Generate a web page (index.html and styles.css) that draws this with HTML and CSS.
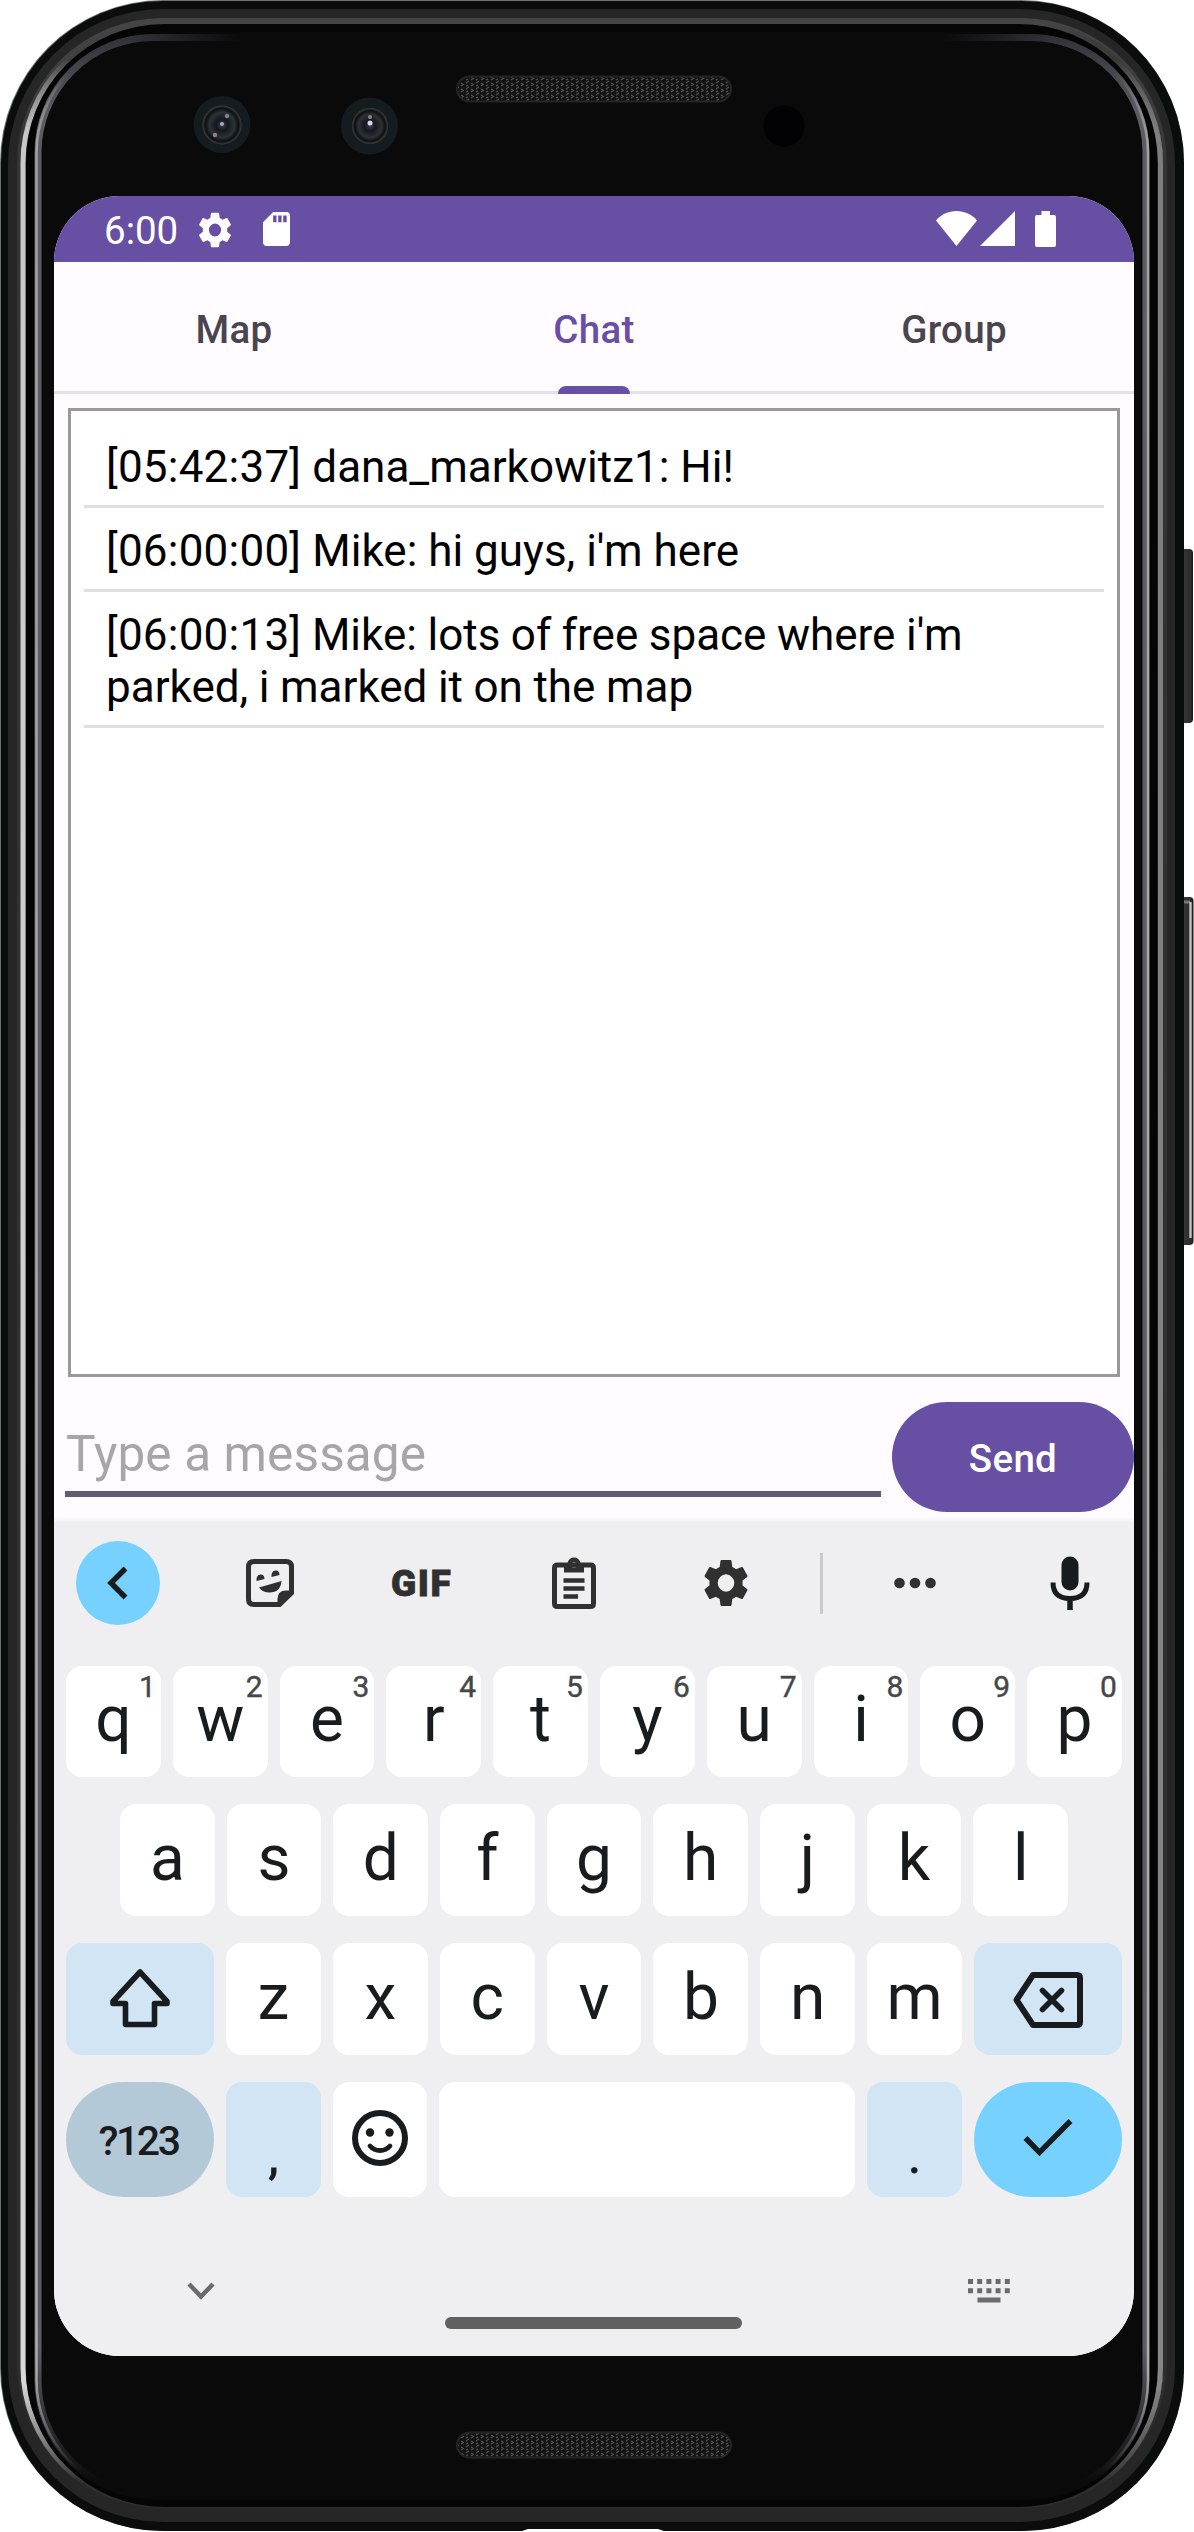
FILE: index.html
```html
<!DOCTYPE html>
<html lang="en">
<head>
<meta charset="utf-8">
<title>Chat</title>
<link rel="stylesheet" href="styles.css">
</head>
<body>
<div class="phone">
  <svg class="shell" width="1194" height="2532" viewBox="0 0 1194 2532" aria-hidden="true">
    <defs>
      <linearGradient id="bright" x1="0" y1="0" x2="0" y2="1">
        <stop offset="0.015" stop-color="#fff" stop-opacity="0"/>
        <stop offset="0.045" stop-color="#c8c8c8"/>
        <stop offset="0.95" stop-color="#d8d8d8"/>
        <stop offset="0.99" stop-color="#fff" stop-opacity="0"/>
      </linearGradient>
      <linearGradient id="inner" x1="0" y1="0" x2="0" y2="1">
        <stop offset="0" stop-color="#32323a"/>
        <stop offset="0.03" stop-color="#5c5c63"/>
        <stop offset="0.94" stop-color="#5c5c63"/>
        <stop offset="0.995" stop-color="#0a0a0a"/>
      </linearGradient>
      <linearGradient id="fadeX" x1="0" y1="0" x2="1" y2="0">
        <stop offset="0" stop-color="#0a0a0a" stop-opacity="0"/>
        <stop offset="0.12" stop-color="#0a0a0a"/>
        <stop offset="0.88" stop-color="#0a0a0a"/>
        <stop offset="1" stop-color="#0a0a0a" stop-opacity="0"/>
      </linearGradient>
      <linearGradient id="band" x1="0" y1="0" x2="0" y2="1">
        <stop offset="0" stop-color="#454545"/>
        <stop offset="0.06" stop-color="#343434"/>
        <stop offset="1" stop-color="#2e2e2e"/>
      </linearGradient>
      <linearGradient id="shade" x1="0" y1="0" x2="1" y2="0">
        <stop offset="0.9" stop-color="#222" stop-opacity="0"/>
        <stop offset="1" stop-color="#222" stop-opacity="0.45"/>
      </linearGradient>
      <linearGradient id="key" x1="0" y1="0" x2="1" y2="0">
        <stop offset="0" stop-color="#1c1c1c"/>
        <stop offset="0.4" stop-color="#343434"/>
        <stop offset="0.85" stop-color="#2c2c2c"/>
        <stop offset="1" stop-color="#161616"/>
      </linearGradient>
      <pattern id="mesh" width="10" height="6" patternUnits="userSpaceOnUse">
        <rect width="10" height="6" fill="#131313"/>
        <path d="M1 2l3-2M6 5l3-2M1 5l2 1M6 2l2-1" stroke="#525252" stroke-width="1.2"/>
      </pattern>
      <radialGradient id="lens" cx="0.5" cy="0.5" r="0.5">
        <stop offset="0" stop-color="#3c3c58"/>
        <stop offset="0.3" stop-color="#14181d"/>
        <stop offset="0.65" stop-color="#2c3236"/>
        <stop offset="0.85" stop-color="#0d0f11"/>
        <stop offset="1" stop-color="#3b4043"/>
      </radialGradient>
    </defs>
    <rect x="1178" y="549" width="15" height="174" rx="4" fill="url(#key)"/>
    <rect x="1178" y="897" width="15.500" height="348" rx="4" fill="url(#key)"/>
    <path d="M1184 902h6" stroke="#777" stroke-width="3"/>
    <path d="M1190.500 902v336" stroke="#c4c4c4" stroke-width="2.400"/>
    <rect x="0" y="0" width="1184" height="2531" rx="163" fill="#6c706e"/>
    <rect x="1" y="1" width="1183" height="2530" rx="162" fill="#0b0c0c"/>
    <rect x="8" y="9" width="1167" height="2513" rx="155" fill="#262626"/>
    <rect x="17" y="18" width="1150" height="2490" rx="146" fill="url(#band)"/>
    <rect x="23" y="22" width="1137.500" height="2486" rx="141" fill="none" stroke="url(#bright)" stroke-width="5"/>
    <rect x="23" y="22" width="1137.500" height="2486" rx="141" fill="none" stroke="url(#shade)" stroke-width="5.500"/>
    <rect x="26" y="24" width="1131.500" height="2483" rx="138" fill="#050505"/>
    <rect x="38" y="37.500" width="1108" height="2458" rx="115" fill="#0a0a0a" stroke="url(#inner)" stroke-width="7"/>
    <rect x="36.500" y="37" width="1111.500" height="2459" rx="116" fill="none" stroke="url(#bright)" stroke-width="2.500" opacity="0.65"/>
    <rect x="130" y="32" width="924" height="12" fill="url(#fadeX)"/>
    <path d="M519 2532l9-3h130l9 3z" fill="#fff"/>
    <circle cx="222" cy="124.500" r="28.500" fill="#151c20"/>
    <circle cx="222" cy="125" r="19.500" fill="url(#lens)"/>
    <circle cx="222" cy="124" r="2" fill="#aab"/>
    <circle cx="227" cy="116" r="2.200" fill="#8d7f80"/>
    <circle cx="215" cy="135" r="2.200" fill="#8a8283"/>
    <circle cx="369.500" cy="126" r="28.500" fill="#151c20"/>
    <circle cx="370" cy="126" r="18" fill="url(#lens)"/>
    <circle cx="370" cy="123" r="2.500" fill="#d5d8e6"/>
    <circle cx="370" cy="117" r="2" fill="#888"/>
    <circle cx="784" cy="126" r="20.500" fill="#020104"/>
    <rect x="457" y="76.500" width="274" height="25" rx="12.500" fill="url(#mesh)" stroke="#242424" stroke-width="2"/>
    <rect x="457" y="2432.500" width="274" height="25" rx="12.500" fill="url(#mesh)" stroke="#242424" stroke-width="2"/>
  </svg>

  <main class="screen">
    <header class="status">
      <span class="clock">6:00</span>
      <svg class="st-gear" width="34" height="36" viewBox="2 2 20 20" preserveAspectRatio="none"><path fill="#fff" d="M19.140 12.940c.04-.3.06-.61.06-.94 0-.32-.02-.64-.07-.94l2.030-1.580c.18-.14.23-.41.12-.61l-1.920-3.320c-.12-.22-.37-.29-.59-.22l-2.390.96c-.5-.38-1.030-.7-1.620-.94l-.36-2.540c-.04-.24-.24-.41-.48-.41h-3.840c-.24 0-.43.17-.47.41l-.36 2.540c-.59.24-1.130.57-1.620.94l-2.390-.96c-.22-.08-.47 0-.59.22L2.740 8.870c-.12.21-.08.47.12.61l2.030 1.580c-.05.3-.09.63-.09.94s.02.64.07.94l-2.030 1.580c-.18.14-.23.41-.12.61l1.920 3.320c.12.22.37.29.59.22l2.390-.96c.5.38 1.030.7 1.620.94l.36 2.540c.05.24.24.41.48.41h3.840c.24 0 .44-.17.47-.41l.36-2.540c.59-.24 1.130-.56 1.620-.94l2.390.96c.22.08.47 0 .59-.22l1.920-3.320c.12-.22.07-.47-.12-.61zM12 15.600a3.600 3.600 0 1 1 0-7.200 3.600 3.600 0 0 1 0 7.200z"/></svg>
      <svg class="st-sd" width="27" height="34" viewBox="4 2 16 20" preserveAspectRatio="none"><path fill="#fff" d="M18 2h-8L4.020 8 4 20c0 1.100.9 2 2 2h12c1.100 0 2-.9 2-2V4c0-1.100-.9-2-2-2zm-6 6h-2V4h2zm3 0h-2V4h2zm3 0h-2V4h2z"/></svg>
      <span class="spring"></span>
      <svg class="st-wifi" width="41" height="35" viewBox="0 0 41 35"><path fill="#fff" d="M20.500 35L0 9.500C5 3.500 12.500 0 20.500 0S36 3.500 41 9.500z"/></svg>
      <svg class="st-cell" width="35" height="35" viewBox="0 0 35 35"><path fill="#fff" d="M35 0v35H0z"/></svg>
      <svg class="st-batt" width="21" height="36" viewBox="0 0 21 36"><path fill="#fff" d="M6.500 0h8.500v4h4q2 0 2 2v28q0 2-2 2H2q-2 0-2-2V6q0-2 2-2h4.500z"/></svg>
    </header>

    <nav class="tabs">
      <a class="tab">Map</a>
      <a class="tab active">Chat</a>
      <a class="tab">Group</a>
    </nav>

    <section class="log">
      <p class="msg"><span class="time">[05:42:37] </span>dana_markowitz1: Hi!</p>
      <p class="msg"><span class="time">[06:00:00] </span>Mike: hi guys, i'm here</p>
      <p class="msg tight"><span class="time">[06:00:13] </span>Mike: lots of free space where i'm parked, i marked it on the map</p>
    </section>

    <div class="compose">
      <div class="field">Type a message</div>
      <button class="send">Send</button>
    </div>

    <section class="keyboard">
      <div class="tools">
        <span class="tool back"><svg width="84" height="84" viewBox="0 0 84 84"><path d="M49.500 27.500L35 42l14.500 14.500" fill="none" stroke="#191c1e" stroke-width="5.500"/></svg></span>
        <svg class="tool sticker" width="48" height="48" viewBox="0 0 48 48"><path d="M8 2.500h32q5.500 0 5.500 5.500v26L33.500 45.500H8q-5.500 0-5.500-5.500V8q0-5.500 5.500-5.500z" fill="none" stroke="#303030" stroke-width="5"/><path d="M31.500 46V40q0-8.500 8.500-8.500h6zM10.500 22q-.5-6 4-6.500 4-.3 4 4.500zM25.500 18q-.5-6 4-6.500 4-.3 4 4.500zM13 28.500L35.500 22q-1 11.500-12 11.500-7 0-10.500-5z" fill="#303030"/></svg>
        <span class="tool gif">GIF</span>
        <svg class="tool clip" width="44" height="52" viewBox="0 0 44 52"><path d="M5.500 8h33q3 0 3 3v35.500q0 3-3 3h-33q-3 0-3-3V11q0-3 3-3z" fill="none" stroke="#303030" stroke-width="5"/><path fill-rule="evenodd" d="M12 15.500V6h3.500Q17 .5 22 .5T28.500 6H32v9.500zM22 5.200a2.700 2.700 0 1 0 0 5.400 2.700 2.700 0 0 0 0-5.400z" fill="#303030"/><path d="M11.500 23.500h21M11.500 31.500h21M11.500 39.500h14.500" stroke="#303030" stroke-width="4.600"/></svg>
        <svg class="tool cog" width="46" height="48" viewBox="2 2 20 20" preserveAspectRatio="none"><path fill="#303030" d="M19.140 12.940c.04-.3.06-.61.06-.94 0-.32-.02-.64-.07-.94l2.030-1.580c.18-.14.23-.41.12-.61l-1.920-3.320c-.12-.22-.37-.29-.59-.22l-2.390.96c-.5-.38-1.030-.7-1.620-.94l-.36-2.540c-.04-.24-.24-.41-.48-.41h-3.840c-.24 0-.43.17-.47.41l-.36 2.540c-.59.24-1.130.57-1.620.94l-2.390-.96c-.22-.08-.47 0-.59.22L2.740 8.870c-.12.21-.08.47.12.61l2.030 1.580c-.05.3-.09.63-.09.94s.02.64.07.94l-2.030 1.580c-.18.14-.23.41-.12.61l1.920 3.320c.12.22.37.29.59.22l2.390-.96c.5.38 1.030.7 1.620.94l.36 2.540c.05.24.24.41.48.41h3.840c.24 0 .44-.17.47-.41l.36-2.540c.59-.24 1.130-.56 1.620-.94l2.390.96c.22.08.47 0 .59-.22l1.920-3.320c.12-.22.07-.47-.12-.61zM12 15.600a3.600 3.600 0 1 1 0-7.200 3.600 3.600 0 0 1 0 7.200z"/></svg>
        <span class="tool rule"></span>
        <svg class="tool more" width="42" height="12" viewBox="0 0 42 12"><g fill="#303030"><circle cx="5.500" cy="6" r="5.300"/><circle cx="21" cy="6" r="5.300"/><circle cx="36.500" cy="6" r="5.300"/></g></svg>
        <svg class="tool mic" width="40" height="54" viewBox="0 0 40 54"><rect x="11.500" y="0.500" width="17" height="34" rx="8.500" fill="#191c1e"/><path d="M3 26.500q0 16 17 16t17-16" fill="none" stroke="#191c1e" stroke-width="5"/><path d="M20 42v12" stroke="#191c1e" stroke-width="5.500"/></svg>
      </div>

      <div class="row r1">
        <span class="k">q<sup>1</sup></span><span class="k">w<sup>2</sup></span><span class="k">e<sup>3</sup></span><span class="k">r<sup>4</sup></span><span class="k">t<sup>5</sup></span><span class="k">y<sup>6</sup></span><span class="k">u<sup>7</sup></span><span class="k">i<sup>8</sup></span><span class="k">o<sup>9</sup></span><span class="k">p<sup>0</sup></span>
      </div>
      <div class="row r2">
        <span class="k">a</span><span class="k">s</span><span class="k">d</span><span class="k">f</span><span class="k">g</span><span class="k">h</span><span class="k">j</span><span class="k">k</span><span class="k">l</span>
      </div>
      <div class="row r3">
        <span class="k wide blue"><svg width="62" height="60" viewBox="0 0 62 60"><path d="M31 4L4 33.500v2h12.500v21h29v-21H58v-2z" fill="none" stroke="#191c1e" stroke-width="5.600" stroke-linejoin="round"/></svg></span><span class="k">z</span><span class="k">x</span><span class="k">c</span><span class="k">v</span><span class="k">b</span><span class="k">n</span><span class="k">m</span><span class="k wide blue"><svg class="del" width="70" height="56" viewBox="0 0 70 56"><path d="M20 3h44q3 0 3 3v44q0 3-3 3H20L3.500 28z" fill="none" stroke="#191c1e" stroke-width="6" stroke-linejoin="round"/><path d="M29.500 18.500l19 19M48.500 18.500l-19 19" stroke="#191c1e" stroke-width="5.600" stroke-linecap="round"/></svg></span>
      </div>
      <div class="row r4">
        <span class="k wide sym">?123</span><span class="k blue punct">,</span><span class="k"><svg width="56" height="56" viewBox="0 0 56 56"><circle cx="28" cy="28" r="25" fill="none" stroke="#191c1e" stroke-width="6"/><circle cx="18" cy="22.500" r="4.200" fill="#191c1e"/><circle cx="37.500" cy="22.500" r="4.200" fill="#191c1e"/><path d="M18 36q4 4.500 10 4.500T38 36" fill="none" stroke="#191c1e" stroke-width="4.800" stroke-linecap="round"/></svg></span><span class="k space"></span><span class="k blue punct">.</span><span class="k wide enter"><svg width="50" height="40" viewBox="0 0 50 40"><path d="M2.500 20L16.500 34.500 47.500 3" fill="none" stroke="#191c1e" stroke-width="5.400"/></svg></span>
      </div>

      <footer class="navbar">
        <svg class="hide" width="28" height="18" viewBox="0 0 28 18"><path d="M2 2l12 12.500L26 2" fill="none" stroke="#6b6b6b" stroke-width="4.400"/></svg>
        <span class="handle"></span>
        <svg class="ime" width="43" height="24" viewBox="0 0 43 24"><path d="M0 2.500h43M0 11.700h43" stroke="#6b6b6b" stroke-width="5" stroke-dasharray="5 4.200"/><path d="M9.500 21h23" stroke="#6b6b6b" stroke-width="5"/></svg>
      </footer>
    </section>
  </main>
</div>
</body>
</html>
```
FILE: styles.css
```css
* { box-sizing: border-box; }
body { margin: 0; background: #fff; font-family: Roboto, "Liberation Sans", sans-serif; }
.phone { position: relative; width: 1194px; height: 2532px; padding: 196px 60px 0 54px; overflow: hidden; }
.shell { position: absolute; left: 0; top: 0; }
svg { display: block; flex: none; }

.screen { position: relative; width: 1080px; height: 2160px; border-radius: 66px; overflow: hidden; background: #fffbfe; display: flex; flex-direction: column; }

.status { height: 66px; flex: none; background: #6750a4; display: flex; align-items: flex-start; padding: 15px 78px 0 50px; color: #fff; }
.clock { font-size: 38.5px; line-height: 45px; margin-top: -3px; }
.st-gear { margin: 1px 0 0 20px; }
.st-sd { margin: 1px 0 0 31px; }
.spring { flex: 1; }
.st-cell { margin-left: 3px; }
.st-batt { margin-left: 20px; }

.tabs { height: 132px; flex: none; display: flex; border-bottom: 3px solid #e7e0ec; }
.tab { flex: 1; height: 132px; display: flex; justify-content: center; padding-top: 45px; font-size: 38.5px; line-height: 45px; font-weight: 500; letter-spacing: .3px; color: #49454f; }
.active { position: relative; color: #6750a4; }
.active::after { content: ""; position: absolute; left: 50%; bottom: 0; width: 72px; height: 8px; margin-left: -36px; border-radius: 8px 8px 0 0; background: #6750a4; }

.log { margin: 14px 14px 0; height: 969px; flex: none; border: 3px solid #999; background: #fff; padding: 13px; }
.msg { margin: 0; padding: 17px 22px 12px; border-bottom: 3px solid #dfdfdf; font-size: 44px; line-height: 52px; color: #000; }
.time { letter-spacing: .22px; }
.tight { word-spacing: -.4px; }

.compose { height: 145px; flex: none; display: flex; padding: 25px 0 0 11px; gap: 11px; background: linear-gradient(#fffbfe 140px, #f3eff2); }
.field { width: 816px; height: 95px; padding: 23px 1px 0; border-bottom: 6px solid #625b71; font-size: 49.5px; line-height: 58px; letter-spacing: .12px; color: #a7a5a7; }
.send { width: 242px; height: 110px; padding: 2px 0 0; border: 0; border-radius: 55px; background: #6750a4; color: #fff; font: 500 38.5px/45px Roboto, sans-serif; letter-spacing: .3px; }

.keyboard { flex: 1; background: #efeff1; padding: 19px 12px 0; color: #191c1e; }
.tools { height: 84px; margin-bottom: 41px; display: flex; align-items: center; }
.back { width: 84px; height: 84px; margin-left: 10px; border-radius: 50%; background: #77d1ff; }
.sticker { margin-left: 86px; }
.gif { width: 64px; margin-left: 97px; font-size: 37px; line-height: 40px; font-weight: 900; letter-spacing: 1.5px; color: #303030; padding-top: 1px; -webkit-text-stroke: .8px #303030; }
.clip { margin-left: 97px; }
.cog { margin-left: 107px; }
.rule { width: 3px; height: 61px; margin-left: 71px; background: #cacbcd; }
.more { margin-left: 71px; }
.mic { margin-left: 114px; }

.row { display: flex; gap: 12px; height: 111px; margin-bottom: 27px; }
.r2 { padding: 0 54px; height: 112px; }
.r3 { height: 112px; }
.r4 { height: 115px; margin-bottom: 0; }
.k { position: relative; flex: 1 1 0; min-width: 0; display: flex; justify-content: center; align-items: center; border-radius: 16px; background: #fff; font-size: 64px; line-height: 111px; padding-bottom: 3px; }
.r1 .k { padding-bottom: 5px; }
.k sup { position: absolute; right: 5px; top: 3px; font-size: 30px; line-height: 35px; font-weight: 400; -webkit-text-stroke: .4px #444749; color: #444749; }
.row .wide { flex: 0 0 148px; }
.blue { background: #d2e5f4; }
.del { margin: 4px 0 0; }
.row .sym { border-radius: 58px; background: #b4c9d7; font-size: 41px; font-weight: 500; letter-spacing: -2.4px; padding: 4px 3px 0 0; }
.row .punct { font-size: 50px; padding-top: 36px; -webkit-text-stroke: .8px #191c1e; }
.row .space { flex: 0 0 416px; }
.row .enter { border-radius: 58px; background: #77d1ff; }

.navbar { display: flex; align-items: flex-start; height: 159px; }
.hide { margin: 85px 0 0 121px; }
.handle { width: 297px; height: 12px; margin: 120px 0 0 230px; border-radius: 6px; background: #606060; }
.ime { margin: 82px 0 0 226px; }
```
